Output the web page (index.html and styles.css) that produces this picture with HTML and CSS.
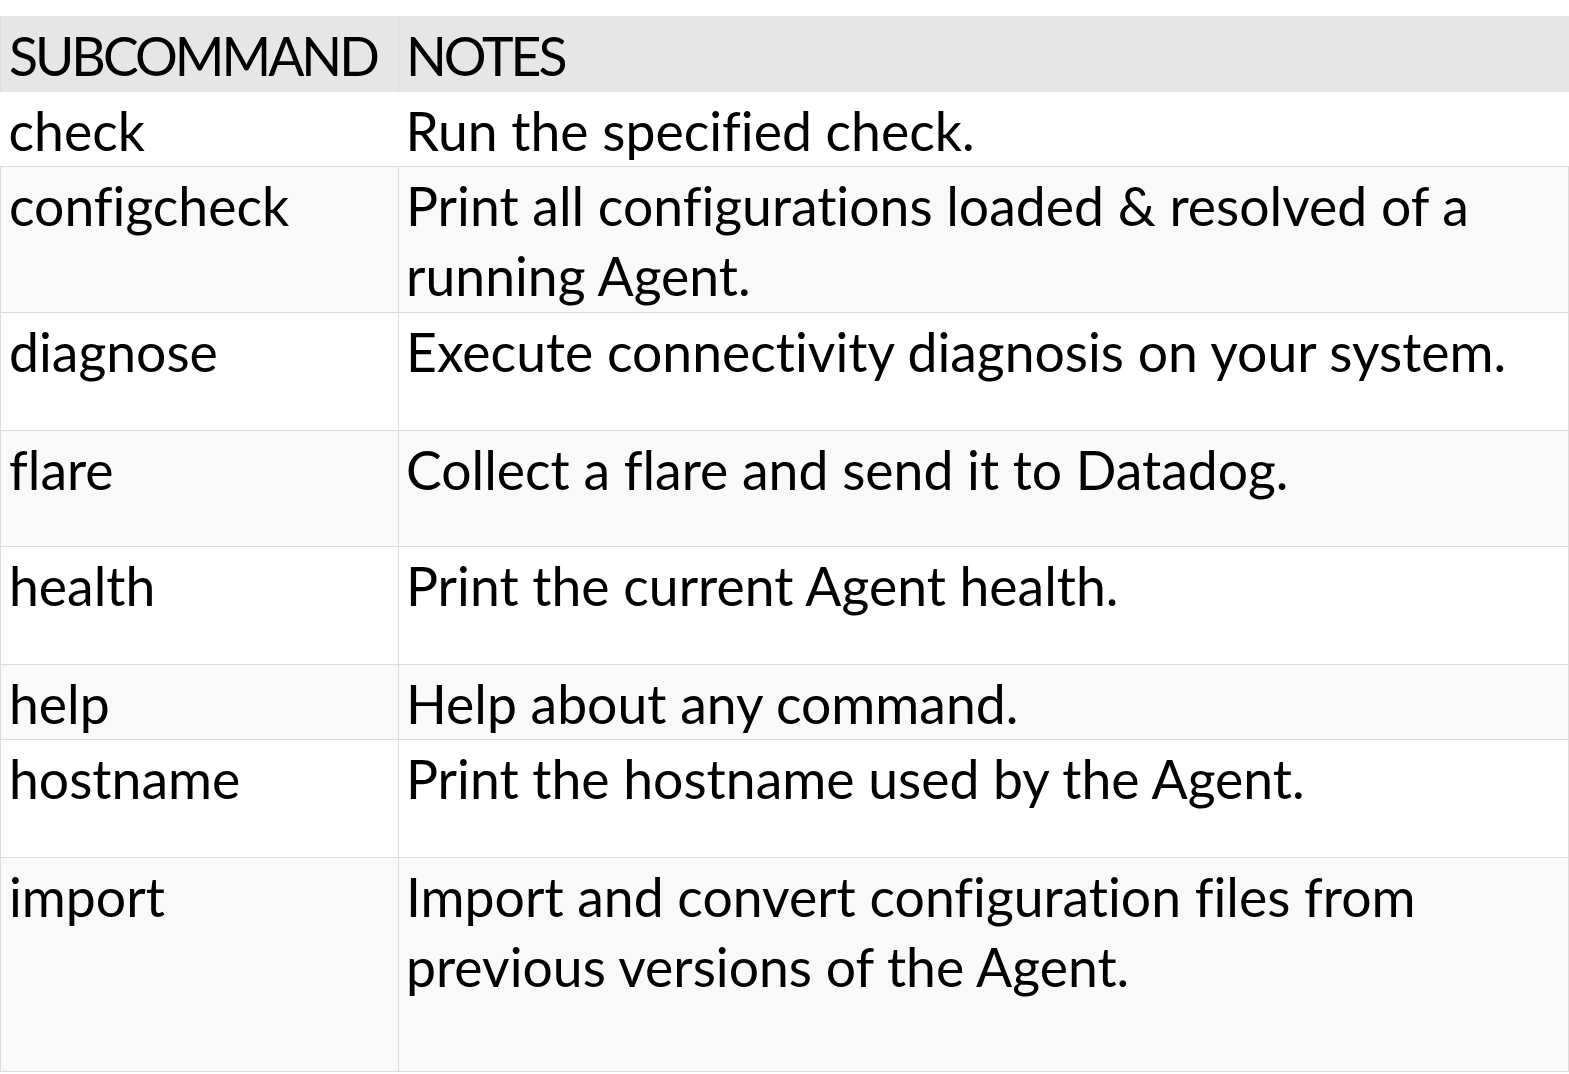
FILE: index.html
```html
<!DOCTYPE html>
<html lang="en">
<head>
<meta charset="utf-8">
<title>Agent subcommands</title>
<link rel="stylesheet" href="styles.css">
</head>
<body>
<table class="cmd-table">
  <colgroup>
    <col class="col-cmd">
    <col class="col-notes">
  </colgroup>
  <thead>
    <tr class="row-head">
      <th>SUBCOMMAND</th>
      <th>NOTES</th>
    </tr>
  </thead>
  <tbody>
    <tr class="row-first h-75">
      <td>check</td>
      <td>Run the specified check.</td>
    </tr>
    <tr class="alt h-146">
      <td>configcheck</td>
      <td>Print all configurations loaded &amp; resolved of a running Agent.</td>
    </tr>
    <tr class="h-117">
      <td>diagnose</td>
      <td>Execute connectivity diagnosis on your system.</td>
    </tr>
    <tr class="alt h-116">
      <td>flare</td>
      <td>Collect a flare and send it to Datadog.</td>
    </tr>
    <tr class="h-117">
      <td>health</td>
      <td>Print the current Agent health.</td>
    </tr>
    <tr class="alt h-75">
      <td>help</td>
      <td>Help about any command.</td>
    </tr>
    <tr class="h-117">
      <td>hostname</td>
      <td>Print the hostname used by the Agent.</td>
    </tr>
    <tr class="alt h-216">
      <td>import</td>
      <td>Import and convert configuration files from previous versions of the Agent.</td>
    </tr>
  </tbody>
</table>
</body>
</html>
```
FILE: styles.css
```css
html, body {
  margin: 0;
  padding: 0;
  background: #ffffff;
}

body {
  padding-top: 16px;
  font-family: Lato, "Open Sans", "Liberation Sans", sans-serif;
  color: #000000;
}

.cmd-table {
  width: 1568px;
  border-collapse: collapse;
  table-layout: fixed;
  font-size: 53.5px;
  line-height: 70px;
  font-variant-ligatures: none;
}

.col-cmd { width: 398px; }
.col-notes { width: 1170px; }

.cmd-table th,
.cmd-table td {
  padding: 3px 7px 0 8px;
  text-align: left;
  vertical-align: top;
  font-weight: 400;
  border: 1px solid #dcdcdc;
}

.cmd-table td:last-child,
.cmd-table th:last-child {
  padding-left: 7px;
  padding-right: 40px;
}

.row-head th {
  background: #e6e6e6;
  border-top: none;
  border-right: none;
  border-bottom: none;
  height: 72px;
  padding-top: 4px;
  letter-spacing: -3px;
}

.row-first td {
  border: none;
  background: #ffffff;
}

.alt td { background: #f9f9f9; }

.h-75 td { height: 71px; }
.h-116 td { height: 112px; }
.h-117 td { height: 114px; }
.h-146 td { height: 142px; }
.h-216 td { height: 210px; }
```
